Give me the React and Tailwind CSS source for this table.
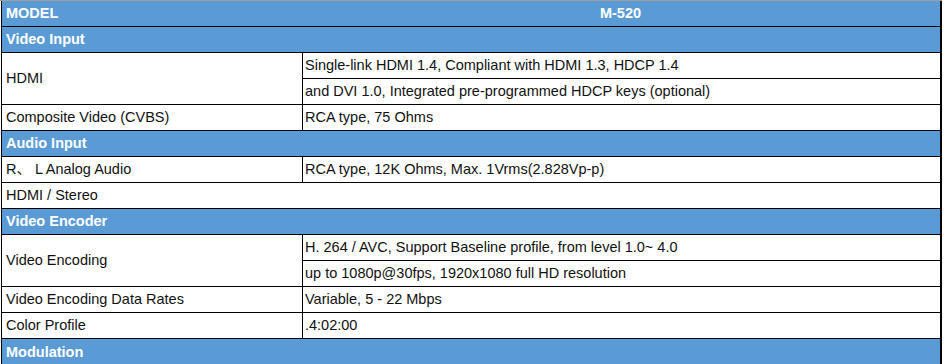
const rows = [
  { type: "section", label: "Video Input" },
  { type: "merged", label: "HDMI", values: ["Single-link HDMI 1.4, Compliant with HDMI 1.3, HDCP 1.4", "and DVI 1.0, Integrated pre-programmed HDCP keys (optional)"] },
  { type: "pair", label: "Composite Video (CVBS)", value: "RCA type, 75 Ohms" },
  { type: "section", label: "Audio Input" },
  { type: "pair", label: "R、 L Analog Audio", value: "RCA type, 12K Ohms, Max. 1Vrms(2.828Vp-p)" },
  { type: "full", label: "HDMI / Stereo" },
  { type: "section", label: "Video Encoder" },
  { type: "merged", label: "Video Encoding", values: ["H. 264 / AVC, Support Baseline profile, from level 1.0~ 4.0", "up to 1080p@30fps, 1920x1080 full HD resolution"] },
  { type: "pair", label: "Video Encoding Data Rates", value: "Variable, 5 - 22 Mbps" },
  { type: "pair", label: "Color Profile", value: ".4:02:00" },
  { type: "section", label: "Modulation", last: true },
];

function Row({ row }) {
  const line = row.last ? "" : "border-b border-black";
  if (row.type === "section") {
    return (
      <div className={`h-[26px] ${row.last ? "h-[25px]" : ""} ${line} bg-[#5b9bd5] flex items-center pl-1 font-bold text-white`}>
        {row.label}
      </div>
    );
  }
  if (row.type === "full") {
    return <div className={`h-[26px] ${line} flex items-center pl-1`}>{row.label}</div>;
  }
  if (row.type === "pair") {
    return (
      <div className={`h-[26px] ${line} flex`}>
        <div className="w-[301px] border-r border-black flex items-center pl-1">{row.label}</div>
        <div className="flex-1 flex items-center pl-[2px]">{row.value}</div>
      </div>
    );
  }
  return (
    <div className={`h-[52px] ${line} flex`}>
      <div className="w-[301px] border-r border-black flex items-center pl-1">{row.label}</div>
      <div className="flex-1 flex flex-col">
        <div className="h-[26px] border-b border-black flex items-center pl-[2px]">{row.values[0]}</div>
        <div className="h-[25px] flex items-center pl-[2px]">{row.values[1]}</div>
      </div>
    </div>
  );
}

export default function App() {
  return (
    <div className="w-[945px] h-[364px] bg-white overflow-hidden text-[14.5px] text-[#111] leading-none" style={{ fontFamily: '"Liberation Sans", Arial, "Noto Sans CJK SC", sans-serif' }}>
      <div className="border-t border-[#a0a0a0] w-[942px]">
        <div className="ml-px border-l border-r-2 border-black">
          <div className="h-[26px] border-b border-black bg-[#5b9bd5] flex items-center font-bold text-white">
            <div className="w-[301px] pl-1">MODEL</div>
            <div className="flex-1 text-center pr-[2px]">M-520</div>
          </div>
          {rows.map((r, i) => (
            <Row key={i} row={r} />
          ))}
        </div>
      </div>
    </div>
  );
}
